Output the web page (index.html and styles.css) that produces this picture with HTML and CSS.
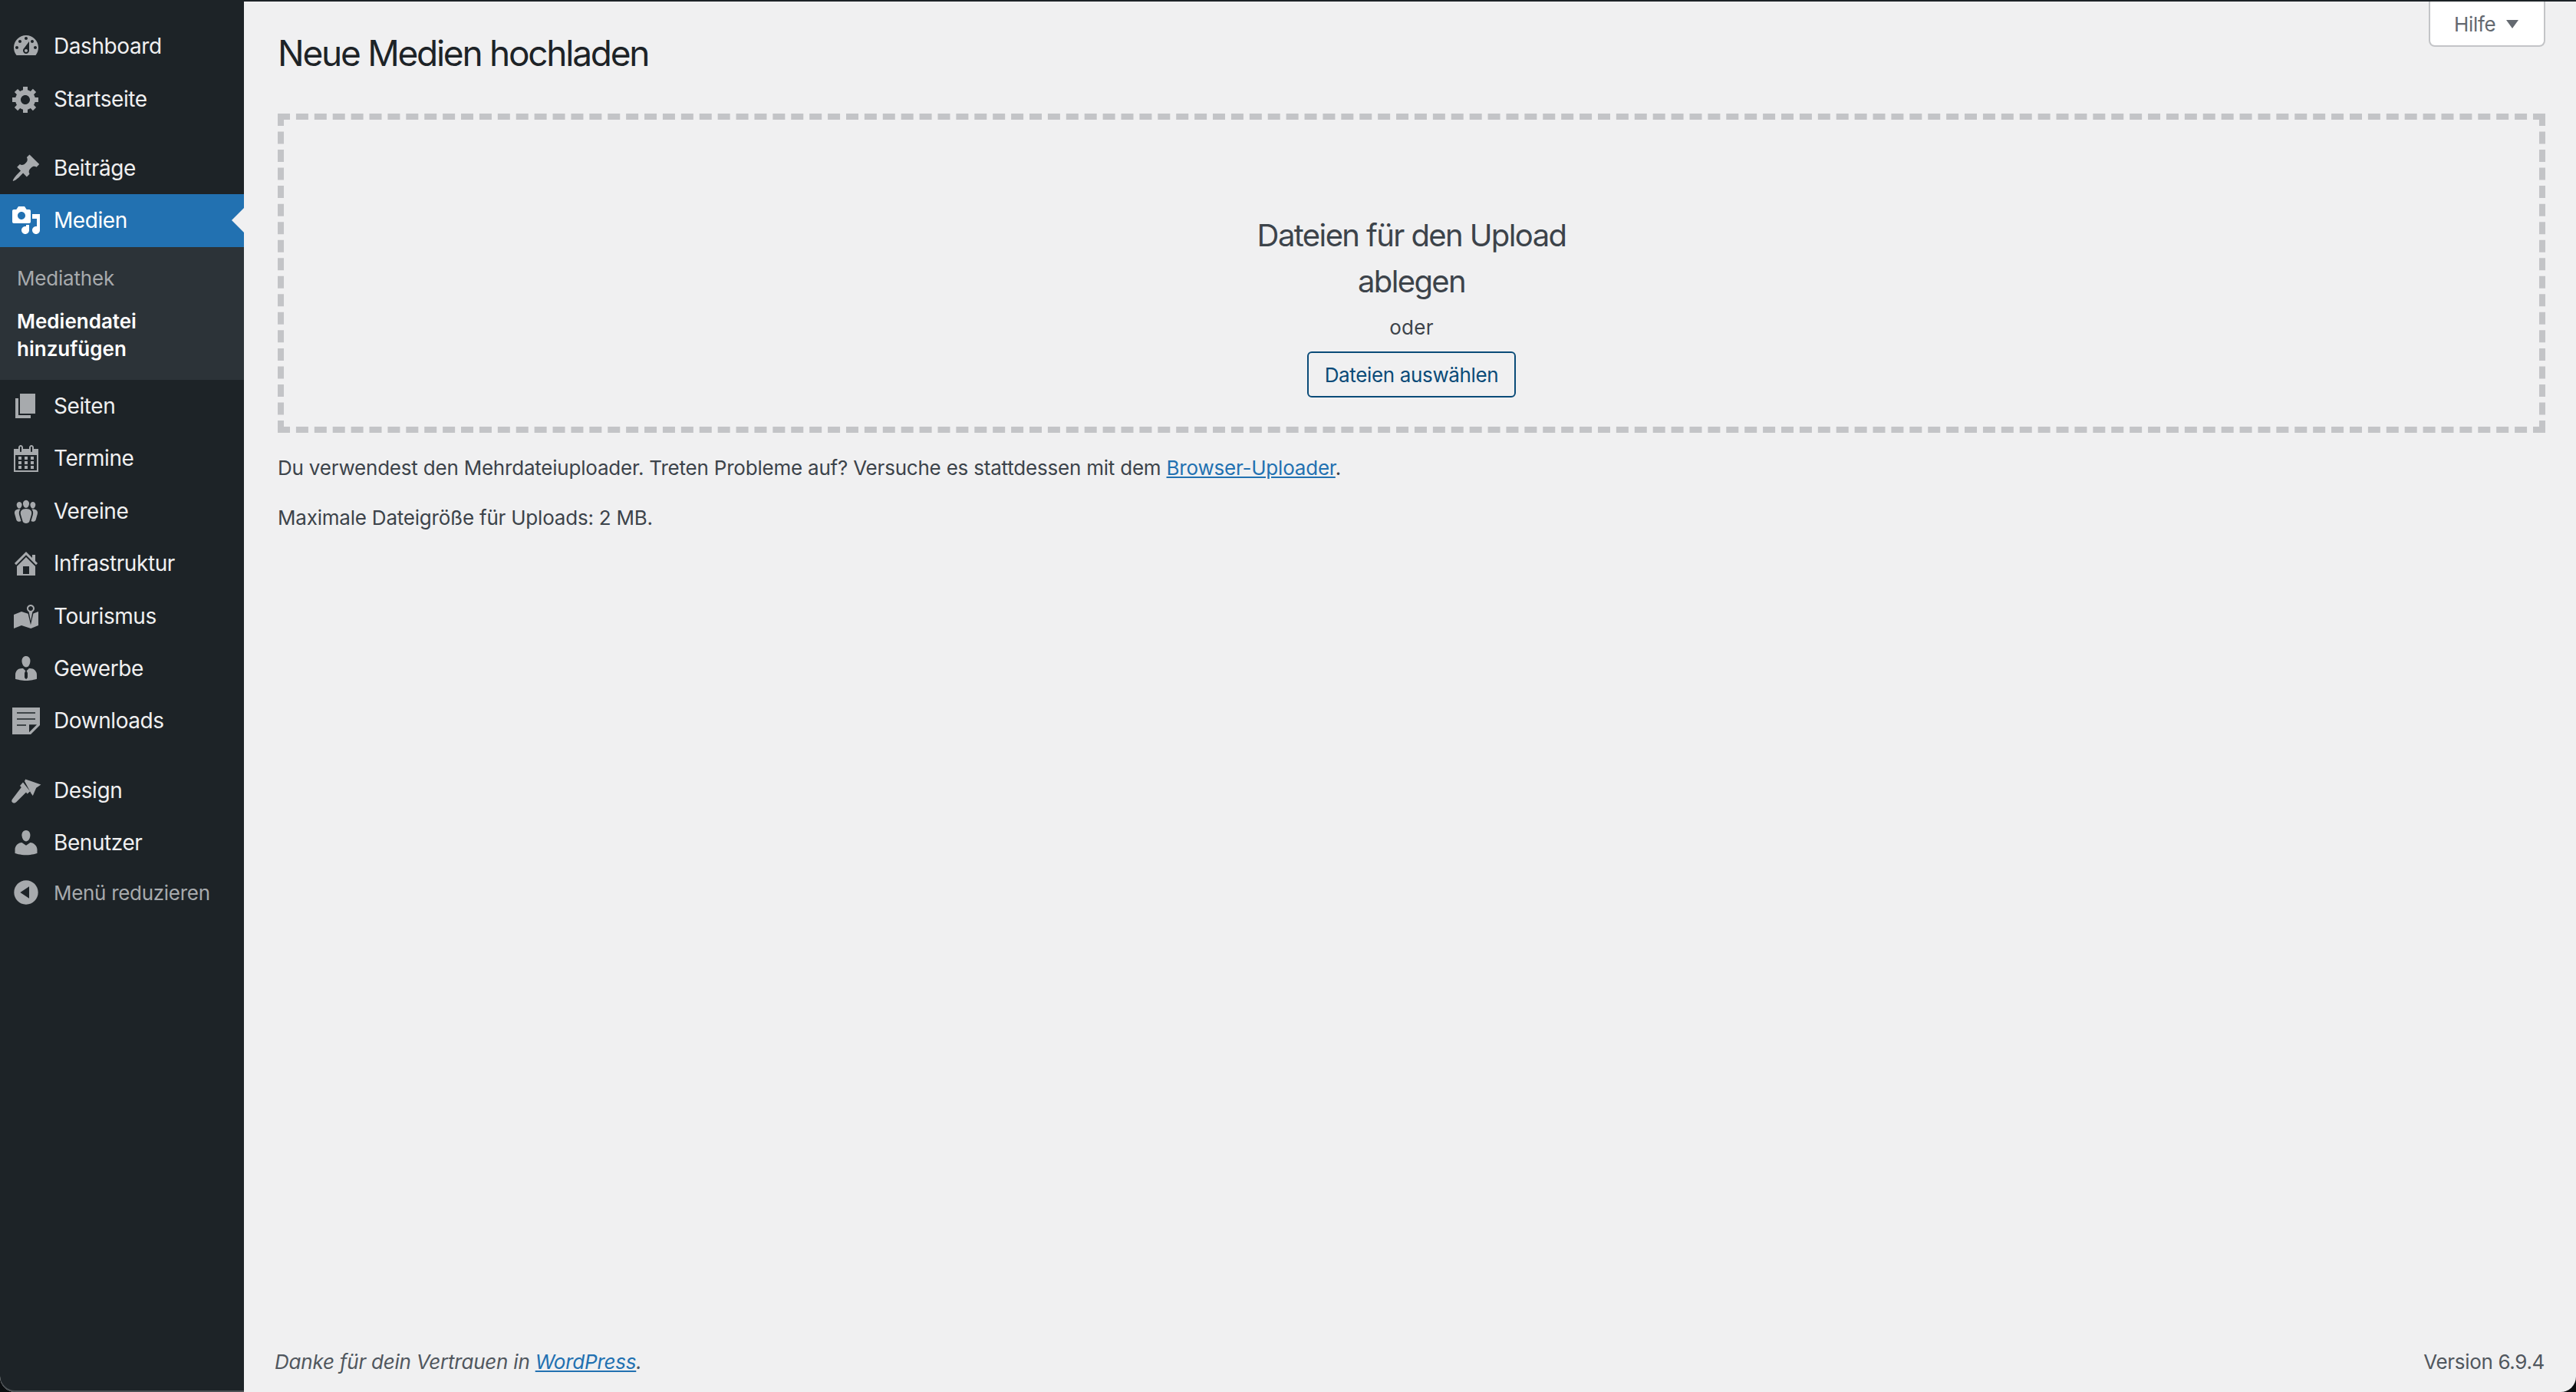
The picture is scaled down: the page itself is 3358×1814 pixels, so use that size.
FILE: index.html
```html
<!DOCTYPE html>
<html lang="de">
<head>
<meta charset="utf-8">
<title>Neue Medien hochladen</title>
<link rel="stylesheet" href="styles.css">
</head>
<body>
<div class="window">
  <nav class="sidebar">
    <ul class="menu">
      <li class="item"><svg class="icon" viewBox="0 0 20 20"><path fill-rule="evenodd" d="M3.76 16h12.48c1.1-1.37 1.76-3.11 1.76-5 0-4.42-3.58-8-8-8s-8 3.58-8 8c0 1.89.66 3.63 1.76 5zM10 4c.55 0 1 .45 1 1s-.45 1-1 1-1-.45-1-1 .45-1 1-1zM6 6c.55 0 1 .45 1 1s-.45 1-1 1-1-.45-1-1 .45-1 1-1zm8 0c.55 0 1 .45 1 1s-.45 1-1 1-1-.45-1-1 .45-1 1-1zm-5.37 5.55L12 7v6c0 1.1-.9 2-2 2s-2-.9-2-2c0-.57.24-1.08.63-1.45zM4 10c.55 0 1 .45 1 1s-.45 1-1 1-1-.45-1-1 .45-1 1-1zm12 0c.55 0 1 .45 1 1s-.45 1-1 1-1-.45-1-1 .45-1 1-1zm-5 3c0-.55-.45-1-1-1s-1 .45-1 1 .45 1 1 1 1-.45 1-1z"/></svg><span>Dashboard</span></li>
      <li class="item"><svg class="icon" viewBox="0 0 20 20"><path fill-rule="evenodd" d="M18 12h-2.18c-.17.7-.44 1.35-.81 1.93l1.54 1.54-2.1 2.1-1.54-1.54c-.58.36-1.23.63-1.91.79V19H8v-2.18c-.68-.16-1.33-.43-1.91-.79l-1.54 1.54-2.12-2.12 1.54-1.54c-.36-.58-.63-1.23-.79-1.91H1V9.03h2.17c.16-.7.44-1.35.8-1.94L2.43 5.55l2.1-2.1 1.54 1.54c.58-.37 1.24-.64 1.93-.81V2h3v2.18c.68.16 1.33.43 1.91.79l1.54-1.54 2.12 2.12-1.54 1.54c.36.59.64 1.24.8 1.94H18V12zm-8.5 1.5c1.66 0 3-1.34 3-3s-1.34-3-3-3-3 1.34-3 3 1.34 3 3 3z"/></svg><span>Startseite</span></li>
      <li class="separator"></li>
      <li class="item"><svg class="icon" viewBox="0 0 20 20"><path d="M10.44 3.02l1.82-1.82 6.36 6.35-1.83 1.82c-1.05-.68-2.48-.57-3.41.36l-.75.75c-.92.93-1.04 2.35-.35 3.41l-1.83 1.82-2.41-2.41-2.8 2.79c-.42.42-3.38 2.71-3.8 2.29s1.86-3.39 2.28-3.81l2.79-2.79L4.1 9.36l1.83-1.82c1.05.69 2.48.57 3.4-.36l.75-.75c.93-.92 1.05-2.35.36-3.41z"/></svg><span>Beiträge</span></li>
      <li class="item current"><svg class="icon" viewBox="0 0 20 20"><path fill-rule="evenodd" d="M13 11V4c0-.55-.45-1-1-1h-1.67L9 1H5L3.67 3H2c-.55 0-1 .45-1 1v7c0 .55.45 1 1 1h10c.55 0 1-.45 1-1zM7 4.5c1.38 0 2.5 1.12 2.5 2.5S8.38 9.5 7 9.5 4.5 8.38 4.5 7 5.62 4.5 7 4.5zM14 6h5v10.5c0 1.38-1.12 2.5-2.5 2.5S14 17.88 14 16.5s1.12-2.5 2.5-2.5c.17 0 .34.02.5.05V9h-3V6zm-4 8.05V13h2v3.5c0 1.38-1.12 2.5-2.5 2.5S7 17.88 7 16.5 8.12 14 9.5 14c.17 0 .34.02.5.05z"/></svg><span>Medien</span></li>
      <li class="submenu">
        <div class="subitem">Mediathek</div>
        <div class="subitem active">Mediendatei hinzufügen</div>
      </li>
      <li class="item"><svg class="icon" viewBox="0 0 20 20"><path d="M6 15V2h10v13H6zm-1 1h8v2H3V5h2v11z"/></svg><span>Seiten</span></li>
      <li class="item"><svg class="icon" viewBox="0 0 20 20"><path fill-rule="evenodd" d="M15 4h3v15H2V4h3V3c0-.41.15-.76.44-1.06.29-.29.65-.44 1.06-.44s.77.15 1.06.44c.29.3.44.65.44 1.06v1h4V3c0-.41.15-.76.44-1.06.29-.29.65-.44 1.06-.44s.77.15 1.06.44c.29.3.44.65.44 1.06v1zM6 3v2.5c0 .14.05.26.15.36.09.09.21.14.35.14s.26-.05.35-.14c.1-.1.15-.22.15-.36V3c0-.14-.05-.26-.15-.35-.09-.1-.21-.15-.35-.15s-.26.05-.35.15c-.1.09-.15.21-.15.35zm7 0v2.5c0 .14.05.26.14.36.1.09.22.14.36.14s.26-.05.36-.14c.09-.1.14-.22.14-.36V3c0-.14-.05-.26-.14-.35-.1-.1-.22-.15-.36-.15s-.26.05-.36.15c-.09.09-.14.21-.14.35zm4 15V8H3v10h14zM7 9v2H5V9h2zm2 0h2v2H9V9zm4 2V9h2v2h-2zm-6 1v2H5v-2h2zm2 0h2v2H9v-2zm4 2v-2h2v2h-2zm-6 1v2H5v-2h2zm4 2H9v-2h2v2zm4 0h-2v-2h2v2z"/></svg><span>Termine</span></li>
      <li class="item"><svg class="icon" viewBox="0 0 20 20"><path d="M8.03 4.46c-.29 1.28.55 3.46 1.97 3.46 1.41 0 2.25-2.18 1.96-3.46-.22-.98-1.08-1.63-1.96-1.63-.89 0-1.74.65-1.97 1.63zm-4.13.9c-.25 1.08.47 2.93 1.67 2.93s1.92-1.85 1.67-2.93c-.19-.83-.92-1.39-1.67-1.39s-1.48.56-1.67 1.39zm8.86 0c-.25 1.08.47 2.93 1.66 2.93 1.2 0 1.92-1.85 1.67-2.93-.19-.83-.92-1.39-1.67-1.39-.74 0-1.47.56-1.66 1.39zm-.59 11.43l1.25-4.3C14.2 10 12.71 8.47 10 8.47c-2.72 0-4.21 1.53-3.44 4.02l1.26 4.3C8.05 17.51 9 18 10 18c.98 0 1.94-.49 2.17-1.21zm-6.1-7.63c-.49.67-.96 1.83-.42 3.59l1.12 3.79c-.34.2-.77.31-1.2.31-.85 0-1.65-.41-1.85-1.03l-1.07-3.65c-.65-2.11.61-3.4 2.92-3.4.27 0 .54.02.79.06-.1.1-.2.22-.29.33zm8.35-.39c2.31 0 3.58 1.29 2.92 3.4l-1.07 3.65c-.2.62-1 1.03-1.85 1.03-.43 0-.86-.11-1.2-.31l1.11-3.77c.55-1.78.08-2.94-.42-3.61-.08-.11-.18-.23-.28-.33.25-.04.51-.06.79-.06z"/></svg><span>Vereine</span></li>
      <li class="item"><svg class="icon" viewBox="0 0 20 20"><path fill-rule="evenodd" d="M16 8.5l1.53 1.53-1.06 1.06L10 4.62l-6.47 6.47-1.06-1.06L10 2.5l4 4v-2h2v4zm-6-2.46l6 5.99V18H4v-5.97zM12 17v-5H8v5h4z"/></svg><span>Infrastruktur</span></li>
      <li class="item"><svg class="icon" viewBox="0 0 20 20"><path fill-rule="evenodd" d="M13 13.14l1.17-5.94c.79-.43 1.33-1.25 1.33-2.2 0-1.38-1.12-2.5-2.5-2.5S10.5 3.62 10.5 5c0 .95.54 1.77 1.33 2.2zm0-9.64c.83 0 1.5.67 1.5 1.5s-.67 1.5-1.5 1.5-1.5-.67-1.5-1.5.67-1.5 1.5-1.5zm1.72 4.8L18 6.97v9L13.12 18 7 15.97l-5 2v-9l5-2 4.27 1.41 1.73 7.3z"/></svg><span>Tourismus</span></li>
      <li class="item"><svg class="icon" viewBox="0 0 20 20"><path d="M7.3 6l-.03-.19c-.04-.37-.05-.73-.03-1.08.02-.36.1-.71.25-1.04.14-.32.31-.61.52-.86s.49-.46.83-.6c.34-.15.72-.23 1.13-.23.69 0 1.26.2 1.71.59s.76.87.91 1.44.18 1.16.09 1.78l-.03.19c-.01.09-.05.25-.11.48-.05.24-.12.47-.2.69-.08.21-.19.45-.34.72-.14.27-.3.49-.47.69-.18.19-.4.34-.67.48-.27.13-.55.19-.86.19s-.59-.06-.87-.19c-.26-.13-.49-.29-.67-.5-.18-.2-.34-.42-.49-.66-.15-.25-.26-.49-.34-.73-.09-.25-.16-.47-.2-.67-.06-.21-.1-.37-.12-.5zm9.2 6.24c.41.7.5 1.41.5 2.14v2.49c0 .03-.12.08-.29.13-.18.04-.42.13-.97.27-.55.12-1.1.24-1.65.34s-1.19.19-1.95.27c-.75.08-1.46.12-2.13.12-.68 0-1.39-.04-2.14-.12-.75-.07-1.4-.17-1.98-.27-.58-.11-1.08-.23-1.56-.34-.49-.11-.8-.21-1.06-.29L3 16.87v-2.49c0-.75.07-1.46.46-2.15s.81-1.25 1.5-1.68C5.66 10.12 7.19 10 8 10l1.67 1.67L9 13v3l1.02 1.08L11 16v-3l-.68-1.33L11.97 10c.77 0 2.2.07 2.9.52.71.45 1.21 1.02 1.63 1.72z"/></svg><span>Gewerbe</span></li>
      <li class="item"><svg class="icon" viewBox="0 0 20 20"><path fill-rule="evenodd" d="M1 1.5h18V13l-6 6H1zM4 4.6v.8h12v-.8zm0 4v.8h12v-.8zm0 4v.8h6v-.8zm8 0v5l5-5z"/></svg><span>Downloads</span></li>
      <li class="separator"></li>
      <li class="item"><svg class="icon" viewBox="0 0 20 20"><path d="M9.6 2.700L19.700 6.300 16.600 8.400 14.400 13.500 13.300 12.000 9 4zM8 4.800L12.600 10.600 10.800 12.200 10 11.200 3.600 17.600C2.700 18.500 1.600 18.500 1 17.800 .4 17.100 .5 16.200 1.300 15.400L6.900 8 6 7z"/></svg><span>Design</span></li>
      <li class="item"><svg class="icon" viewBox="0 0 20 20"><path d="M10 9.25c-2.27 0-2.73-3.44-2.73-3.44C7 4.02 7.82 2 9.97 2c2.16 0 2.98 2.02 2.71 3.81 0 0-.41 3.44-2.68 3.44zm0 2.57L12.72 10c2.39 0 4.52 2.33 4.52 4.53v2.49s-3.65 1.13-7.24 1.13c-3.65 0-7.24-1.13-7.24-1.13v-2.49c0-2.25 1.94-4.48 4.47-4.48z"/></svg><span>Benutzer</span></li>
      <li class="item collapse"><svg class="icon" viewBox="0 0 20 20"><path fill-rule="evenodd" d="M10 2.16c4.33 0 7.84 3.51 7.84 7.84s-3.51 7.84-7.84 7.84S2.16 14.33 2.16 10 5.71 2.16 10 2.16zm2 11.72V6.12L6.18 9.97z"/></svg><span>Menü reduzieren</span></li>
    </ul>
  </nav>
  <main class="main">
    <div class="content">
      <header class="head">
        <h1 class="title">Neue Medien hochladen</h1>
        <button class="help" type="button">Hilfe<span class="caret"></span></button>
      </header>
      <section class="dropzone">
        <p class="drop-title">Dateien für den Upload<br>ablegen</p>
        <p class="drop-or">oder</p>
        <button class="select" type="button">Dateien auswählen</button>
      </section>
      <p class="note first">Du verwendest den Mehrdateiuploader. Treten Probleme auf? Versuche es stattdessen mit dem <a href="#">Browser-Uploader</a>.</p>
      <p class="note second">Maximale Dateigröße für Uploads: 2 MB.</p>
    </div>
    <footer class="footer">
      <span class="thanks">Danke für dein Vertrauen in <a href="#">WordPress</a>.</span>
      <span class="version">Version 6.9.4</span>
    </footer>
  </main>
</div>
</body>
</html>
```

FILE: styles.css
```css
* { box-sizing: border-box; }
html, body { margin: 0; padding: 0; height: 100%; background: #0b0e10; }
body { font-family: Inter, "Liberation Sans", sans-serif; font-size: 26px; color: #3c434a; overflow: hidden; }
.window {
  display: flex;
  height: 1814px;
  border-top: 2px solid #1d2327;
  border-radius: 0 0 20px 20px;
  background: #f0f0f1;
  overflow: hidden;
}
.sidebar { width: 318px; flex: none; background: #1d2327; border-radius: 0 0 0 20px; box-shadow: inset 0 -2px 0 #4c5155; }
.menu { list-style: none; margin: 0; padding: 24px 0 0; }
.item {
  position: relative;
  display: flex;
  align-items: center;
  gap: 16px;
  height: 68.4px;
  padding-left: 14px;
  font-size: 28px;
  letter-spacing: -0.42px;
  color: #f0f0f1;
}
.icon { width: 40px; height: 40px; flex: none; fill: #a7aaad; }
.separator { height: 22px; }
.current { background: #2271b1; color: #fff; }
.current .icon { fill: #fff; }
.current::after {
  content: "";
  position: absolute;
  right: 0;
  top: 18px;
  border: 16px solid transparent;
  border-left-width: 0;
  border-right-color: #f0f0f1;
}
.submenu { background: #2c3338; padding: 13px 0 11px; }
.subitem { padding: 10px 24px 10px 22px; font-size: 26px; line-height: 36.4px; letter-spacing: -0.2px; color: #a7aaad; }
.subitem.active { color: #fff; font-weight: 600; letter-spacing: 0; }
.collapse { height: 64px; padding-bottom: 2px; font-size: 26px; letter-spacing: -0.3px; color: #a7aaad; }
.main { flex: 1; min-width: 0; display: flex; flex-direction: column; }
.content { flex: 1; padding-right: 40px; padding-left: 44px; }
.head { display: flex; justify-content: space-between; align-items: flex-start; height: 146px; }
.title { margin: 44px 0 0; font-size: 46px; font-weight: 400; line-height: 46px; letter-spacing: -2.25px; color: #1d2327; }
.help {
  display: flex;
  align-items: center;
  gap: 14px;
  width: 152px;
  height: 59px;
  padding: 2px 0 0 31px;
  background: #fff;
  border: 2px solid #c3c4c7;
  border-top: 0;
  border-radius: 0 0 8px 8px;
  font: 26px Inter, sans-serif;
  letter-spacing: -0.3px;
  color: #646970;
}
.caret { border: 8px solid transparent; border-bottom-width: 0; border-top: 11px solid #646970; }
.dropzone {
  height: 416px;
  border: 8px dashed #c3c4c7;
  padding-top: 121px;
  text-align: center;
}
.drop-title { margin: 0; font-size: 40px; line-height: 60px; letter-spacing: -1.6px; }
.drop-or { margin: 14px 0 0; font-size: 26px; line-height: 32px; letter-spacing: .3px; }
.select {
  display: block;
  width: 272px;
  height: 60px;
  margin: 15px auto 0;
  padding: 0;
  background: transparent;
  border: 2px solid #0a4b78;
  border-radius: 6px;
  font: 26px Inter, sans-serif;
  letter-spacing: -0.35px;
  color: #0a4b78;
}
.note { margin: 0; font-size: 26px; line-height: 36px; letter-spacing: -0.21px; }
.note.first { margin-top: 28px; }
.note.second { margin-top: 29px; }
.note a, .footer a { color: #2271b1; }
.footer {
  display: flex;
  justify-content: space-between;
  padding: 0 41px 20px 40px;
  font-size: 26px;
  line-height: 38px;
  color: #50575e;
}
.thanks { font-style: italic; letter-spacing: -0.22px; }
.version { letter-spacing: -0.34px; }
```
